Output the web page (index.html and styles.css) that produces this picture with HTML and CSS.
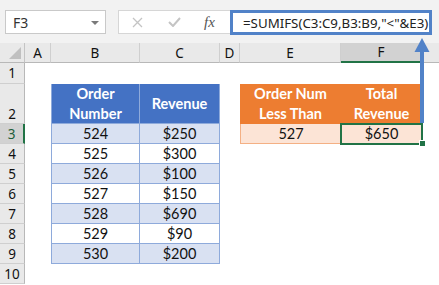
FILE: index.html
```
<!DOCTYPE html>
<html>
<head>
<meta charset="utf-8">
<link rel="stylesheet" href="styles.css">
</head>
<body>
<div class="app">
  <div class="topbar">
    <div class="namebox"><span class="nb-text">F3</span><span class="nb-arrow"></span></div>
    <div class="fxbar">
      <svg class="fx-x" width="11" height="11" viewBox="0 0 11 11"><path d="M1 1 L10 10 M10 1 L1 10" stroke="#c4c4c4" stroke-width="1.3" fill="none"/></svg>
      <svg class="fx-check" width="13" height="10" viewBox="0 0 13 10"><path d="M1 5 L5 9 L12 1" stroke="#c4c4c4" stroke-width="2" fill="none"/></svg>
      <span class="fx-fx">fx</span>
    </div>
    <div class="formula">=SUMIFS(C3:C9,B3:B9,"&lt;"&amp;E3)</div>
  </div>
  <div class="sheet">
    <!-- header row -->
    <div class="corner"><span class="corner-tri"></span></div>
    <div class="ch">A</div>
    <div class="ch">B</div>
    <div class="ch">C</div>
    <div class="ch">D</div>
    <div class="ch">E</div>
    <div class="ch ch-sel">F</div>
    <div class="ch ch-last"></div>
    <!-- row 1 -->
    <div class="rh">1</div>
    <div class="e"></div><div class="e"></div><div class="e"></div><div class="e"></div><div class="e"></div><div class="e"></div><div class="e"></div>
    <!-- row 2 -->
    <div class="rh rh-bottom">2</div>
    <div class="e"></div>
    <div class="bh bh-first">Order<br>Number</div>
    <div class="bh">Revenue</div>
    <div class="e"></div>
    <div class="oh">Order Num<br>Less Than</div>
    <div class="oh">Total<br>Revenue</div>
    <div class="e"></div>
    <!-- row 3 -->
    <div class="rh rh-sel">3</div>
    <div class="e"></div>
    <div class="bc bc-first band">524</div>
    <div class="bc band">$250</div>
    <div class="e"></div>
    <div class="oc oc-first">527</div>
    <div class="oc oc-sel">$650<span class="handle"></span></div>
    <div class="e"></div>
    <!-- row 4 -->
    <div class="rh">4</div>
    <div class="e"></div>
    <div class="bc bc-first">525</div>
    <div class="bc">$300</div>
    <div class="e"></div><div class="e"></div><div class="e"></div><div class="e"></div>
    <!-- row 5 -->
    <div class="rh">5</div>
    <div class="e"></div>
    <div class="bc bc-first band">526</div>
    <div class="bc band">$100</div>
    <div class="e"></div><div class="e"></div><div class="e"></div><div class="e"></div>
    <!-- row 6 -->
    <div class="rh">6</div>
    <div class="e"></div>
    <div class="bc bc-first">527</div>
    <div class="bc">$150</div>
    <div class="e"></div><div class="e"></div><div class="e"></div><div class="e"></div>
    <!-- row 7 -->
    <div class="rh">7</div>
    <div class="e"></div>
    <div class="bc bc-first band">528</div>
    <div class="bc band">$690</div>
    <div class="e"></div><div class="e"></div><div class="e"></div><div class="e"></div>
    <!-- row 8 -->
    <div class="rh">8</div>
    <div class="e"></div>
    <div class="bc bc-first">529</div>
    <div class="bc">$90</div>
    <div class="e"></div><div class="e"></div><div class="e"></div><div class="e"></div>
    <!-- row 9 -->
    <div class="rh">9</div>
    <div class="e"></div>
    <div class="bc bc-first band">530</div>
    <div class="bc band">$200</div>
    <div class="e"></div><div class="e"></div><div class="e"></div><div class="e"></div>
    <!-- row 10 -->
    <div class="rh">10</div>
    <div class="e"></div><div class="e"></div><div class="e"></div><div class="e"></div><div class="e"></div><div class="e"></div><div class="e"></div>
  </div>
  <svg class="arrow" width="18" height="90" viewBox="0 0 18 90">
    <rect x="7" y="14" width="4" height="73" fill="#5182c8"/>
    <polygon points="1.5,16 9,2 16.5,16" fill="#5182c8"/>
  </svg>
</div>
</body>
</html>
```

FILE: styles.css
```
html, body {
  margin: 0;
  padding: 0;
  background: #ffffff;
}
body {
  width: 439px;
  height: 285px;
  overflow: hidden;
}
.app {
  position: relative;
  width: 439px;
  height: 285px;
  font-family: "Lato", "Liberation Sans", sans-serif;
}
.topbar {
  height: 43px;
  box-sizing: border-box;
  padding: 10px 0 0 5px;
  background: #f2f2f2;
  display: flex;
  align-items: flex-start;
}
.namebox {
  width: 101px;
  height: 24px;
  box-sizing: border-box;
  border: 1px solid #c9c9c9;
  background: #fff;
  display: flex;
  align-items: center;
  justify-content: space-between;
  padding: 0 6px 0 7px;
}
.nb-text {
  font-family: "Noto Sans", "Liberation Sans", sans-serif;
  font-size: 14px;
  color: #333;
}
.nb-arrow {
  width: 0;
  height: 0;
  border-left: 4px solid transparent;
  border-right: 4px solid transparent;
  border-top: 4px solid #7a7a7a;
  margin-top: 1px;
}
.fxbar {
  margin-left: 12px;
  width: 112px;
  height: 24px;
  box-sizing: border-box;
  border: 1px solid #d6d6d6;
  border-right: none;
  background: #fff;
  display: flex;
  align-items: center;
  padding-left: 13px;
}
.fx-x {
  margin-right: 25px;
}
.fx-check {
  margin-right: 23px;
}
.fx-fx {
  font-family: "Liberation Serif", serif;
  font-style: italic;
  font-size: 15px;
  color: #555;
}
.formula {
  width: 202px;
  height: 25px;
  box-sizing: border-box;
  border: 3px solid #5182c8;
  background: #fff;
  font-family: "Noto Sans", "Liberation Sans", sans-serif;
  font-size: 13.3px;
  color: #222;
  display: flex;
  align-items: center;
  padding-left: 10px;
  white-space: nowrap;
}
.sheet {
  display: grid;
  grid-template-columns: 25px 26px 89px 80px 20px 101px 81px 17px;
  grid-template-rows: 20px 21px 40px repeat(8, 20px);
  font-size: 14px;
}
.sheet > div {
  box-sizing: border-box;
  display: flex;
  align-items: center;
  justify-content: center;
  color: #111;
}
.corner {
  background: #e9e9e9;
  border-right: 1px solid #c4c4c4;
  border-bottom: 1px solid #b8b8b8;
  position: relative;
}
.corner-tri {
  position: absolute;
  right: 3px;
  bottom: 3px;
  width: 0;
  height: 0;
  border-left: 12px solid transparent;
  border-bottom: 12px solid #c0c0c0;
}
.ch {
  background: #e9e9e9;
  border-right: 1px solid #cfcfcf;
  border-bottom: 1px solid #b8b8b8;
  font-family: "Noto Sans", "Liberation Sans", sans-serif;
  font-size: 13.5px;
  color: #222;
}
.ch-sel {
  background: #d2d2d2;
  border-bottom: 2px solid #217346;
  color: #1e5e3a;
}
.ch-last {
  border-right: none;
}
.rh {
  background: #e9e9e9;
  border-right: 1px solid #b8b8b8;
  border-bottom: 1px solid #cfcfcf;
  font-family: "Noto Sans", "Liberation Sans", sans-serif;
  font-size: 13.5px;
  color: #222;
}
.sheet > .rh-bottom {
  align-items: flex-end;
  padding-bottom: 0px;
}
.sheet > .rh-sel {
  background: #d2d2d2;
  border-right: 2px solid #217346;
  color: #1e5e3a;
}
.e {
  background: #fff;
}
.bh {
  background: #4472c4;
  color: #fff !important;
  font-weight: bold;
  font-size: 14.5px;
  line-height: 20px;
  text-align: center;
  border-right: 1px solid #8eaadb;
  border-bottom: 1px solid #8eaadb;
}
.bh-first {
  border-left: 1px solid #8eaadb;
}
.bc {
  background: #fff;
  border-right: 1px solid #8eaadb;
  border-bottom: 1px solid #8eaadb;
  font-size: 14.5px;
}
.bc-first {
  border-left: 1px solid #8eaadb;
}
.band {
  background: #d9e1f2;
}
.oh {
  background: #ed7d31;
  color: #fff !important;
  font-weight: bold;
  font-size: 14.5px;
  line-height: 20px;
  text-align: center;
}
.oc {
  background: #fce4d6;
  border-bottom: 1px solid #f4b084;
  font-size: 14.5px;
}
.oc-first {
  border-left: 1px solid #f4b084;
}
.oc-sel {
  position: relative;
  outline: 2px solid #217346;
  outline-offset: -1px;
}
.handle {
  position: absolute;
  right: -4px;
  bottom: -4px;
  width: 5px;
  height: 5px;
  background: #217346;
  border: 1px solid #fff;
}
.arrow {
  position: absolute;
  left: 413px;
  top: 36px;
}
```
